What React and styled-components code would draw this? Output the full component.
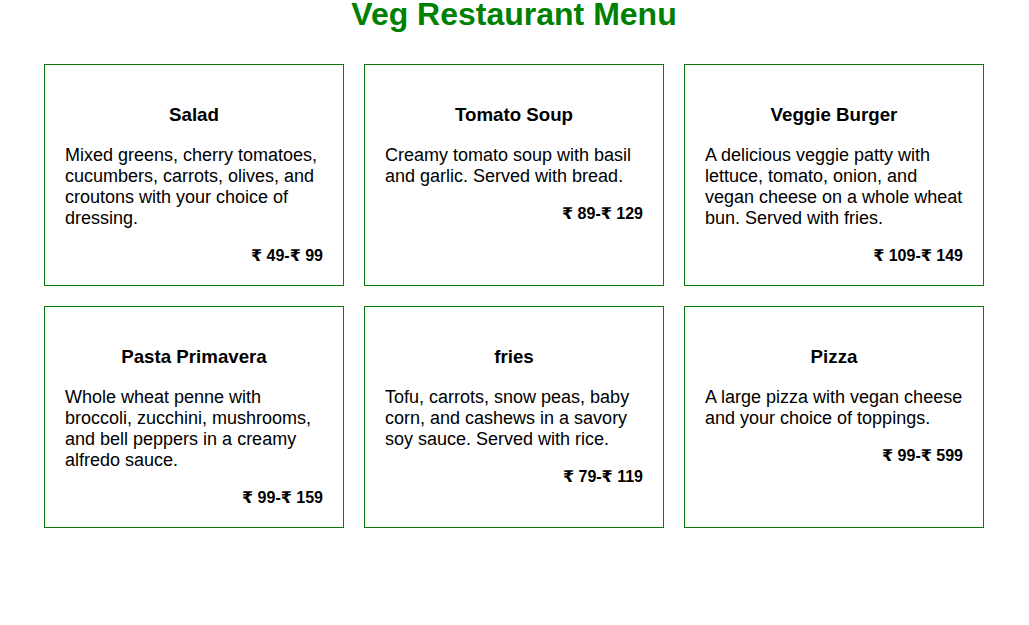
import React from "react";
import styled, { createGlobalStyle } from "styled-components";

const Global = createGlobalStyle`
  html, body { margin: 0; padding: 0; background: #fff; }
  body { font-family: "Liberation Sans", Arial, "DejaVu Sans", sans-serif; color: #000; }
`;

const Page = styled.div`
  display: flex;
  flex-direction: column;
  padding-left: 44px;
  width: 940px;
`;

const Title = styled.h1`
  margin: 0;
  font-size: 32px;
  line-height: 28px;
  font-weight: bold;
  color: #008000;
  text-align: center;
`;

const Grid = styled.div`
  display: grid;
  grid-template-columns: repeat(3, 300px);
  gap: 20px;
  margin-top: 36px;
`;

const Card = styled.div`
  box-sizing: border-box;
  height: 222px;
  border: 1px solid #0a7a0a;
  padding: 20px 20px 22px;
  display: flex;
  flex-direction: column;
`;

const DishName = styled.h3`
  margin: 18.72px 0 19.72px;
  font-size: 18.72px;
  font-weight: bold;
  text-align: center;
`;

const Description = styled.p`
  margin: 0 0 17px;
  font-size: 18px;
`;

const Price = styled.p`
  margin: 0;
  font-size: 16px;
  font-weight: bold;
  text-align: right;
`;

const items = [
  { name: "Salad", desc: "Mixed greens, cherry tomatoes, cucumbers, carrots, olives, and croutons with your choice of dressing.", price: "₹ 49-₹ 99" },
  { name: "Tomato Soup", desc: "Creamy tomato soup with basil and garlic. Served with bread.", price: "₹ 89-₹ 129" },
  { name: "Veggie Burger", desc: "A delicious veggie patty with lettuce, tomato, onion, and vegan cheese on a whole wheat bun. Served with fries.", price: "₹ 109-₹ 149" },
  { name: "Pasta Primavera", desc: "Whole wheat penne with broccoli, zucchini, mushrooms, and bell peppers in a creamy alfredo sauce.", price: "₹ 99-₹ 159" },
  { name: "fries", desc: "Tofu, carrots, snow peas, baby corn, and cashews in a savory soy sauce. Served with rice.", price: "₹ 79-₹ 119" },
  { name: "Pizza", desc: "A large pizza with vegan cheese and your choice of toppings.", price: "₹ 99-₹ 599" },
];

export default function App() {
  return (
    <>
      <Global />
      <Page>
        <Title>Veg Restaurant Menu</Title>
        <Grid>
          {items.map((it) => (
            <Card key={it.name}>
              <DishName>{it.name}</DishName>
              <Description>{it.desc}</Description>
              <Price>{it.price}</Price>
            </Card>
          ))}
        </Grid>
      </Page>
    </>
  );
}
